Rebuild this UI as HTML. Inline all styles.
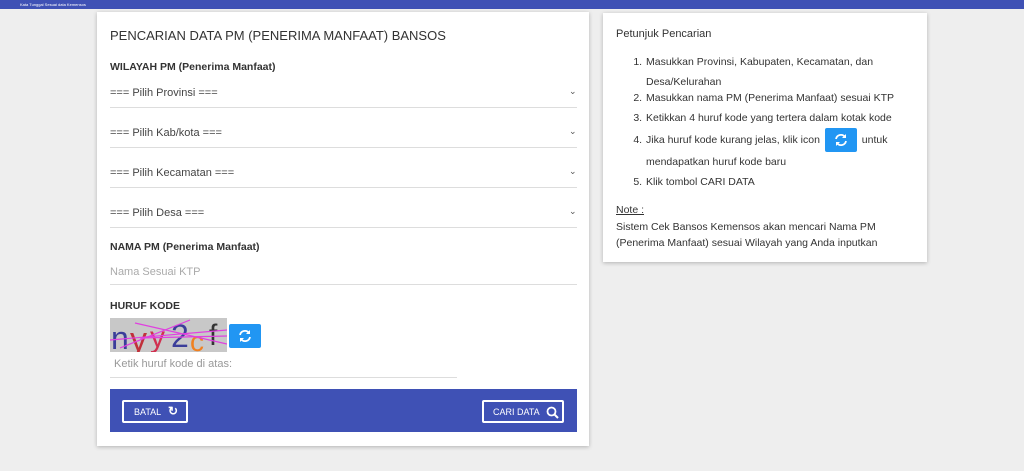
<!DOCTYPE html>
<html><head><meta charset="utf-8"><style>
*{box-sizing:border-box;margin:0;padding:0}
body{width:1024px;height:471px;background:#eeeeee;font-family:"Liberation Sans",sans-serif;color:#333;position:relative;overflow:hidden}
.top{position:absolute;left:0;top:0;width:1024px;height:9px;background:#3f51b5}
.top span{position:absolute;left:20px;top:2px;font-size:4px;color:#fff}
.card{position:absolute;background:#fff;box-shadow:0 1px 4px rgba(0,0,0,.25)}
.a{position:absolute;white-space:nowrap}
.sel{position:absolute;left:110px;width:467px;height:1px;background:#ddd}
.st{position:absolute;left:110px;font-size:11px;color:#444}
.chev{position:absolute;left:569px;font-size:9px;color:#555}
.btn{position:absolute;border:2px solid #fff;color:#fff;font-size:9px;border-radius:2px}
.ref{position:absolute;background:#2196f3;border-radius:2px}
ol{position:absolute;left:645px;top:53px;font-size:10.5px;line-height:19.5px;color:#333;width:270px}
li{padding-left:1px}
</style></head><body>
<div class="top"><span>Kata Tunggal Sesuai data Kemensos</span></div>

<div class="card" style="left:97px;top:12px;width:492px;height:434px"></div>
<div class="a" style="left:110px;top:28px;font-size:13px;color:#333">PENCARIAN DATA PM (PENERIMA MANFAAT) BANSOS</div>
<div class="a" style="left:110px;top:61px;font-size:10.5px;font-weight:bold;color:#333">WILAYAH PM (Penerima Manfaat)</div>

<div class="st" style="top:87px">=== Pilih Provinsi ===</div><div class="chev" style="top:86px">⌄</div><div class="sel" style="top:107px"></div>
<div class="st" style="top:127px">=== Pilih Kab/kota ===</div><div class="chev" style="top:126px">⌄</div><div class="sel" style="top:147px"></div>
<div class="st" style="top:167px">=== Pilih Kecamatan ===</div><div class="chev" style="top:166px">⌄</div><div class="sel" style="top:187px"></div>
<div class="st" style="top:207px">=== Pilih Desa ===</div><div class="chev" style="top:206px">⌄</div><div class="sel" style="top:227px"></div>

<div class="a" style="left:110px;top:241px;font-size:10.5px;font-weight:bold">NAMA PM (Penerima Manfaat)</div>
<div class="a" style="left:110px;top:266px;font-size:11px;color:#aaa">Nama Sesuai KTP</div>
<div class="sel" style="top:284px"></div>

<div class="a" style="left:110px;top:300px;font-size:10.5px;font-weight:bold">HURUF KODE</div>
<svg class="a" style="left:110px;top:318px" width="117" height="34">
<rect width="117" height="34" fill="#c8c8c8"/>
<text x="1" y="31" font-size="32" font-family="Liberation Sans" fill="#3b3e9a">n</text>
<text x="20" y="33" font-size="34" font-family="Liberation Sans" fill="#c0303a">y</text>
<text x="40" y="29" font-size="30" font-family="Liberation Sans" fill="#d03050">y</text>
<text x="61" y="29" font-size="32" font-family="Liberation Sans" fill="#3b3e9a">2</text>
<text x="80" y="33" font-size="28" font-family="Liberation Sans" fill="#f08020">c</text>
<text x="99" y="27" font-size="30" font-family="Liberation Sans" fill="#333">f</text>
<g stroke="#e040e0" stroke-width="1.2"><line x1="0" y1="22" x2="117" y2="12"/><line x1="25" y1="5" x2="117" y2="26"/><line x1="10" y1="30" x2="80" y2="2"/><line x1="30" y1="20" x2="117" y2="18"/></g>
</svg>
<div class="ref" style="left:229px;top:324px;width:32px;height:24px"><svg width="32" height="24"><g fill="none" stroke="#fff" stroke-width="1.8"><path d="M11 11a5 5 0 0 1 9-2"/><path d="M21 13a5 5 0 0 1-9 2"/></g><path d="M21 6v4h-4z M11 18v-4h4z" fill="#fff"/></svg></div>
<div class="a" style="left:114px;top:358px;font-size:11px;color:#999">Ketik huruf kode di atas:</div>
<div class="sel" style="top:377px;width:347px"></div>

<div class="a" style="left:110px;top:389px;width:467px;height:43px;background:#3f51b5"></div>
<div class="btn" style="left:122px;top:400px;width:66px;height:23px"><span class="a" style="left:10px;top:5px">BATAL</span><span class="a" style="left:44px;top:2px;font-size:12px;font-weight:bold">↻</span></div>
<div class="btn" style="left:482px;top:400px;width:82px;height:23px"><span class="a" style="left:9px;top:5px">CARI DATA</span><svg class="a" style="left:62px;top:4px" width="13" height="13"><circle cx="5.5" cy="5.5" r="4" fill="none" stroke="#fff" stroke-width="1.8"/><line x1="8.5" y1="8.5" x2="12" y2="12" stroke="#fff" stroke-width="2"/></svg></div>

<div class="card" style="left:603px;top:13px;width:324px;height:249px"></div>
<div class="a" style="left:616px;top:28px;font-size:11px">Petunjuk Pencarian</div>
<ol>
<li>Masukkan Provinsi, Kabupaten, Kecamatan, dan Desa/Kelurahan</li>
<li style="margin-top:-3px">Masukkan nama PM (Penerima Manfaat) sesuai KTP</li>
<li>Ketikkan 4 huruf kode yang tertera dalam kotak kode</li>
<li style="line-height:21px">Jika huruf kode kurang jelas, klik icon <span style="display:inline-block;width:32px;height:24px;background:#2196f3;border-radius:2px;vertical-align:middle;margin:0 2px;position:relative"><svg width="32" height="24" style="position:absolute;left:0;top:0"><g fill="none" stroke="#fff" stroke-width="1.8"><path d="M11 11a5 5 0 0 1 9-2"/><path d="M21 13a5 5 0 0 1-9 2"/></g><path d="M21 6v4h-4z M11 18v-4h4z" fill="#fff"/></svg></span> untuk mendapatkan huruf kode baru</li>
<li>Klik tombol CARI DATA</li>
</ol>
<div class="a" style="left:616px;top:204px;font-size:10.5px;text-decoration:underline">Note :</div>
<div class="a" style="left:616px;top:219px;font-size:10.5px;line-height:16px">Sistem Cek Bansos Kemensos akan mencari Nama PM<br>(Penerima Manfaat) sesuai Wilayah yang Anda inputkan</div>
</body></html>
